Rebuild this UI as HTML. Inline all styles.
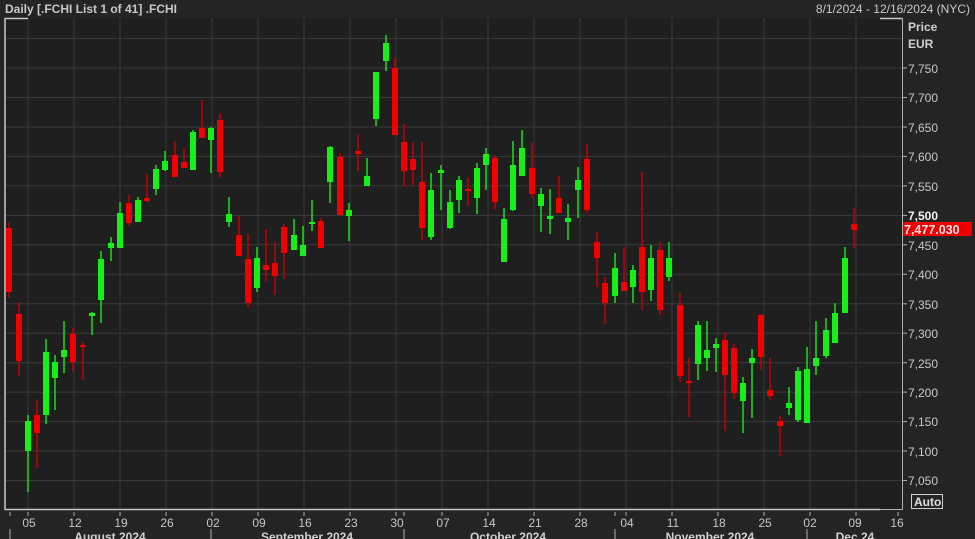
<!DOCTYPE html>
<html><head><meta charset="utf-8"><style>
html,body{margin:0;padding:0;background:#242424;width:975px;height:539px;overflow:hidden;font-family:"Liberation Sans",sans-serif}
svg{position:absolute;left:0;top:0}
</style></head><body>
<svg width="975" height="539" viewBox="0 0 975 539" font-family="Liberation Sans, sans-serif">
<rect x="0" y="0" width="975" height="539" fill="#242424"/>
<rect x="6" y="18" width="896" height="491" fill="#1f1f20"/>
<g stroke="#3a3a3a" stroke-width="1">
<line x1="6" x2="902" y1="38.5" y2="38.5"/><line x1="6" x2="902" y1="68" y2="68"/><line x1="6" x2="902" y1="97.5" y2="97.5"/><line x1="6" x2="902" y1="127" y2="127"/><line x1="6" x2="902" y1="156.4" y2="156.4"/><line x1="6" x2="902" y1="185.9" y2="185.9"/><line x1="6" x2="902" y1="215.4" y2="215.4"/><line x1="6" x2="902" y1="244.8" y2="244.8"/><line x1="6" x2="902" y1="274.3" y2="274.3"/><line x1="6" x2="902" y1="303.8" y2="303.8"/><line x1="6" x2="902" y1="333.2" y2="333.2"/><line x1="6" x2="902" y1="362.7" y2="362.7"/><line x1="6" x2="902" y1="392.1" y2="392.1"/><line x1="6" x2="902" y1="421.6" y2="421.6"/><line x1="6" x2="902" y1="451" y2="451"/><line x1="6" x2="902" y1="480.5" y2="480.5"/>
<line x1="28" x2="28" y1="18" y2="509"/><line x1="74" x2="74" y1="18" y2="509"/><line x1="120" x2="120" y1="18" y2="509"/><line x1="166" x2="166" y1="18" y2="509"/><line x1="212" x2="212" y1="18" y2="509"/><line x1="258" x2="258" y1="18" y2="509"/><line x1="304" x2="304" y1="18" y2="509"/><line x1="350" x2="350" y1="18" y2="509"/><line x1="396" x2="396" y1="18" y2="509"/><line x1="442" x2="442" y1="18" y2="509"/><line x1="488" x2="488" y1="18" y2="509"/><line x1="534" x2="534" y1="18" y2="509"/><line x1="580" x2="580" y1="18" y2="509"/><line x1="626" x2="626" y1="18" y2="509"/><line x1="672" x2="672" y1="18" y2="509"/><line x1="718" x2="718" y1="18" y2="509"/><line x1="764" x2="764" y1="18" y2="509"/><line x1="810" x2="810" y1="18" y2="509"/><line x1="856" x2="856" y1="18" y2="509"/>
</g>
<!-- candles -->
<g stroke-width="1.5">
<g stroke="#c00000" fill="#f00000">
<line x1="9" x2="9" y1="222" y2="298"/><rect x="6" y="228" width="6" height="64" stroke="none"/>
<line x1="19" x2="19" y1="302" y2="376"/><rect x="16" y="314" width="6" height="47" stroke="none"/>
<line x1="37" x2="37" y1="400" y2="468"/><rect x="34" y="415" width="6" height="18" stroke="none"/>
<line x1="73" x2="73" y1="328" y2="372"/><rect x="70" y="334" width="6" height="28" stroke="none"/>
<line x1="83" x2="83" y1="342" y2="380"/><rect x="80" y="345" width="6" height="2" stroke="none"/>
<line x1="129" x2="129" y1="195" y2="226"/><rect x="126" y="203" width="6" height="20" stroke="none"/>
<line x1="147" x2="147" y1="174" y2="202"/><rect x="144" y="198" width="6" height="3" stroke="none"/>
<line x1="175" x2="175" y1="141" y2="177"/><rect x="172" y="155" width="6" height="22" stroke="none"/>
<line x1="184" x2="184" y1="148" y2="168"/><rect x="181" y="162" width="6" height="6" stroke="none"/>
<line x1="202" x2="202" y1="100" y2="138"/><rect x="199" y="128" width="6" height="10" stroke="none"/>
<line x1="220" x2="220" y1="113" y2="177"/><rect x="217" y="120" width="6" height="52" stroke="none"/>
<line x1="239" x2="239" y1="216" y2="256"/><rect x="236" y="235" width="6" height="21" stroke="none"/>
<line x1="248" x2="248" y1="234" y2="308"/><rect x="245" y="259" width="6" height="44" stroke="none"/>
<line x1="266" x2="266" y1="229" y2="281"/><rect x="263" y="265" width="6" height="5" stroke="none"/>
<line x1="275" x2="275" y1="242" y2="295"/><rect x="272" y="263" width="6" height="13" stroke="none"/>
<line x1="284" x2="284" y1="224" y2="279"/><rect x="281" y="227" width="6" height="26" stroke="none"/>
<line x1="321" x2="321" y1="218" y2="248"/><rect x="318" y="221" width="6" height="27" stroke="none"/>
<line x1="340" x2="340" y1="153" y2="215"/><rect x="337" y="157" width="6" height="58" stroke="none"/>
<line x1="358" x2="358" y1="135" y2="171"/><rect x="355" y="151" width="6" height="3" stroke="none"/>
<line x1="395" x2="395" y1="58" y2="135"/><rect x="392" y="68" width="6" height="67" stroke="none"/>
<line x1="404" x2="404" y1="124" y2="187"/><rect x="401" y="142" width="6" height="29" stroke="none"/>
<line x1="413" x2="413" y1="142" y2="186"/><rect x="410" y="159" width="6" height="11" stroke="none"/>
<line x1="422" x2="422" y1="142" y2="240"/><rect x="419" y="182" width="6" height="46" stroke="none"/>
<line x1="468" x2="468" y1="177" y2="206"/><rect x="465" y="189" width="6" height="2" stroke="none"/>
<line x1="495" x2="495" y1="155" y2="209"/><rect x="492" y="158" width="6" height="44" stroke="none"/>
<line x1="532" x2="532" y1="143" y2="198"/><rect x="529" y="168" width="6" height="26" stroke="none"/>
<line x1="559" x2="559" y1="176" y2="213"/><rect x="556" y="198" width="6" height="15" stroke="none"/>
<line x1="587" x2="587" y1="144" y2="213"/><rect x="584" y="159" width="6" height="51" stroke="none"/>
<line x1="597" x2="597" y1="232" y2="287"/><rect x="594" y="242" width="6" height="16" stroke="none"/>
<line x1="605" x2="605" y1="277" y2="324"/><rect x="602" y="283" width="6" height="20" stroke="none"/>
<line x1="624" x2="624" y1="247" y2="291"/><rect x="621" y="282" width="6" height="9" stroke="none"/>
<line x1="642" x2="642" y1="172" y2="310"/><rect x="639" y="247" width="6" height="45" stroke="none"/>
<line x1="660" x2="660" y1="242" y2="315"/><rect x="657" y="250" width="6" height="60" stroke="none"/>
<line x1="680" x2="680" y1="293" y2="382"/><rect x="677" y="305" width="6" height="71" stroke="none"/>
<line x1="689" x2="689" y1="358" y2="417"/><rect x="686" y="381" width="6" height="2" stroke="none"/>
<line x1="725" x2="725" y1="332" y2="431"/><rect x="722" y="340" width="6" height="35" stroke="none"/>
<line x1="734" x2="734" y1="344" y2="399"/><rect x="731" y="348" width="6" height="45" stroke="none"/>
<line x1="761" x2="761" y1="314" y2="370"/><rect x="758" y="315" width="6" height="42" stroke="none"/>
<line x1="770" x2="770" y1="358" y2="400"/><rect x="767" y="390" width="6" height="6" stroke="none"/>
<line x1="780" x2="780" y1="416" y2="456"/><rect x="777" y="421" width="6" height="5" stroke="none"/>
<line x1="854" x2="854" y1="208" y2="248"/><rect x="851" y="224" width="6" height="6" stroke="none"/>
</g>
<g stroke="#16e016" fill="#16f016">
<line x1="28" x2="28" y1="415" y2="492"/><rect x="25" y="421" width="6" height="30" stroke="none"/>
<line x1="46" x2="46" y1="339" y2="424"/><rect x="43" y="352" width="6" height="63" stroke="none"/>
<line x1="55" x2="55" y1="355" y2="410"/><rect x="52" y="362" width="6" height="16" stroke="none"/>
<line x1="64" x2="64" y1="321" y2="373"/><rect x="61" y="350" width="6" height="7" stroke="none"/>
<line x1="92" x2="92" y1="312" y2="335"/><rect x="89" y="313" width="6" height="3" stroke="none"/>
<line x1="101" x2="101" y1="251" y2="323"/><rect x="98" y="259" width="6" height="41" stroke="none"/>
<line x1="111" x2="111" y1="237" y2="261"/><rect x="108" y="243" width="6" height="5" stroke="none"/>
<line x1="120" x2="120" y1="202" y2="248"/><rect x="117" y="213" width="6" height="35" stroke="none"/>
<line x1="138" x2="138" y1="197" y2="222"/><rect x="135" y="200" width="6" height="22" stroke="none"/>
<line x1="156" x2="156" y1="165" y2="195"/><rect x="153" y="169" width="6" height="20" stroke="none"/>
<line x1="165" x2="165" y1="151" y2="171"/><rect x="162" y="161" width="6" height="9" stroke="none"/>
<line x1="193" x2="193" y1="130" y2="170"/><rect x="190" y="132" width="6" height="38" stroke="none"/>
<line x1="211" x2="211" y1="127" y2="173"/><rect x="208" y="128" width="6" height="12" stroke="none"/>
<line x1="229" x2="229" y1="197" y2="227"/><rect x="226" y="214" width="6" height="8" stroke="none"/>
<line x1="257" x2="257" y1="247" y2="292"/><rect x="254" y="258" width="6" height="30" stroke="none"/>
<line x1="294" x2="294" y1="219" y2="250"/><rect x="291" y="235" width="6" height="15" stroke="none"/>
<line x1="303" x2="303" y1="226" y2="256"/><rect x="300" y="245" width="6" height="11" stroke="none"/>
<line x1="312" x2="312" y1="200" y2="231"/><rect x="309" y="222" width="6" height="2" stroke="none"/>
<line x1="330" x2="330" y1="146" y2="203"/><rect x="327" y="147" width="6" height="35" stroke="none"/>
<line x1="349" x2="349" y1="203" y2="241"/><rect x="346" y="210" width="6" height="6" stroke="none"/>
<line x1="367" x2="367" y1="158" y2="186"/><rect x="364" y="176" width="6" height="10" stroke="none"/>
<line x1="376" x2="376" y1="72" y2="126"/><rect x="373" y="72" width="6" height="47" stroke="none"/>
<line x1="386" x2="386" y1="35" y2="71"/><rect x="383" y="43" width="6" height="18" stroke="none"/>
<line x1="431" x2="431" y1="173" y2="240"/><rect x="428" y="190" width="6" height="47" stroke="none"/>
<line x1="441" x2="441" y1="165" y2="210"/><rect x="438" y="170" width="6" height="3" stroke="none"/>
<line x1="450" x2="450" y1="190" y2="229"/><rect x="447" y="202" width="6" height="26" stroke="none"/>
<line x1="459" x2="459" y1="176" y2="213"/><rect x="456" y="180" width="6" height="20" stroke="none"/>
<line x1="477" x2="477" y1="163" y2="214"/><rect x="474" y="168" width="6" height="30" stroke="none"/>
<line x1="486" x2="486" y1="148" y2="190"/><rect x="483" y="154" width="6" height="11" stroke="none"/>
<line x1="504" x2="504" y1="208" y2="262"/><rect x="501" y="219" width="6" height="43" stroke="none"/>
<line x1="513" x2="513" y1="141" y2="211"/><rect x="510" y="165" width="6" height="45" stroke="none"/>
<line x1="522" x2="522" y1="130" y2="176"/><rect x="519" y="148" width="6" height="28" stroke="none"/>
<line x1="541" x2="541" y1="188" y2="232"/><rect x="538" y="194" width="6" height="12" stroke="none"/>
<line x1="550" x2="550" y1="189" y2="234"/><rect x="547" y="216" width="6" height="3" stroke="none"/>
<line x1="568" x2="568" y1="204" y2="240"/><rect x="565" y="218" width="6" height="4" stroke="none"/>
<line x1="578" x2="578" y1="167" y2="218"/><rect x="575" y="180" width="6" height="10" stroke="none"/>
<line x1="615" x2="615" y1="253" y2="303"/><rect x="612" y="268" width="6" height="28" stroke="none"/>
<line x1="633" x2="633" y1="265" y2="303"/><rect x="630" y="270" width="6" height="17" stroke="none"/>
<line x1="651" x2="651" y1="245" y2="301"/><rect x="648" y="258" width="6" height="32" stroke="none"/>
<line x1="669" x2="669" y1="242" y2="281"/><rect x="666" y="258" width="6" height="19" stroke="none"/>
<line x1="698" x2="698" y1="321" y2="380"/><rect x="695" y="325" width="6" height="39" stroke="none"/>
<line x1="707" x2="707" y1="321" y2="371"/><rect x="704" y="350" width="6" height="8" stroke="none"/>
<line x1="716" x2="716" y1="338" y2="372"/><rect x="713" y="344" width="6" height="4" stroke="none"/>
<line x1="743" x2="743" y1="377" y2="433"/><rect x="740" y="383" width="6" height="18" stroke="none"/>
<line x1="752" x2="752" y1="349" y2="418"/><rect x="749" y="358" width="6" height="5" stroke="none"/>
<line x1="789" x2="789" y1="387" y2="415"/><rect x="786" y="403" width="6" height="5" stroke="none"/>
<line x1="798" x2="798" y1="367" y2="422"/><rect x="795" y="371" width="6" height="49" stroke="none"/>
<line x1="807" x2="807" y1="347" y2="423"/><rect x="804" y="369" width="6" height="54" stroke="none"/>
<line x1="816" x2="816" y1="321" y2="375"/><rect x="813" y="358" width="6" height="8" stroke="none"/>
<line x1="826" x2="826" y1="318" y2="358"/><rect x="823" y="330" width="6" height="26" stroke="none"/>
<line x1="835" x2="835" y1="303" y2="343"/><rect x="832" y="313" width="6" height="30" stroke="none"/>
<line x1="845" x2="845" y1="247" y2="313"/><rect x="842" y="258" width="6" height="55" stroke="none"/>
</g>
</g>
<!-- frame -->
<g stroke="#c8c8c8" stroke-width="1.5" fill="none">
<line x1="5" y1="18" x2="5" y2="510"/>
<line x1="5" y1="18.5" x2="28" y2="18.5"/>
<line x1="880" y1="18.5" x2="902" y2="18.5"/>
<line x1="5" y1="509.5" x2="880" y2="509.5"/>
</g>
<line x1="902.5" y1="18" x2="902.5" y2="510" stroke="#b0b0b0" stroke-width="1"/>
<line x1="880" y1="509.5" x2="902" y2="509.5" stroke="#b0b0b0" stroke-width="1"/>
<g stroke="#b0b0b0" stroke-width="1">
<line x1="902" x2="907" y1="68" y2="68"/><line x1="902" x2="907" y1="97.5" y2="97.5"/><line x1="902" x2="907" y1="127" y2="127"/><line x1="902" x2="907" y1="156.4" y2="156.4"/><line x1="902" x2="907" y1="185.9" y2="185.9"/><line x1="902" x2="907" y1="215.4" y2="215.4"/><line x1="902" x2="907" y1="244.8" y2="244.8"/><line x1="902" x2="907" y1="274.3" y2="274.3"/><line x1="902" x2="907" y1="303.8" y2="303.8"/><line x1="902" x2="907" y1="333.2" y2="333.2"/><line x1="902" x2="907" y1="362.7" y2="362.7"/><line x1="902" x2="907" y1="392.1" y2="392.1"/><line x1="902" x2="907" y1="421.6" y2="421.6"/><line x1="902" x2="907" y1="451" y2="451"/><line x1="902" x2="907" y1="480.5" y2="480.5"/>
<line x1="10" x2="10" y1="512" y2="516"/><line x1="28" x2="28" y1="512" y2="516"/><line x1="74" x2="74" y1="512" y2="516"/><line x1="120" x2="120" y1="512" y2="516"/><line x1="166" x2="166" y1="512" y2="516"/><line x1="212" x2="212" y1="512" y2="516"/><line x1="258" x2="258" y1="512" y2="516"/><line x1="304" x2="304" y1="512" y2="516"/><line x1="350" x2="350" y1="512" y2="516"/><line x1="396" x2="396" y1="512" y2="516"/><line x1="404" x2="404" y1="512" y2="516"/><line x1="442" x2="442" y1="512" y2="516"/><line x1="488" x2="488" y1="512" y2="516"/><line x1="534" x2="534" y1="512" y2="516"/><line x1="580" x2="580" y1="512" y2="516"/><line x1="615" x2="615" y1="512" y2="516"/><line x1="626" x2="626" y1="512" y2="516"/><line x1="672" x2="672" y1="512" y2="516"/><line x1="718" x2="718" y1="512" y2="516"/><line x1="764" x2="764" y1="512" y2="516"/><line x1="810" x2="810" y1="512" y2="516"/><line x1="856" x2="856" y1="512" y2="516"/><line x1="898" x2="898" y1="512" y2="516"/>
<line x1="10" x2="10" y1="529" y2="539"/><line x1="211" x2="211" y1="529" y2="539"/><line x1="404" x2="404" y1="529" y2="539"/><line x1="615" x2="615" y1="529" y2="539"/><line x1="807" x2="807" y1="529" y2="539"/>
</g>
<!-- text -->
<text x="5" y="13" font-size="12" font-weight="bold" fill="#c8c8c8">Daily [.FCHI List 1 of 41] .FCHI</text>
<text x="970" y="13" font-size="12" fill="#c8c8c8" text-anchor="end">8/1/2024 - 12/16/2024 (NYC)</text>
<text x="908" y="31" font-size="12" font-weight="bold" fill="#d0d0d0">Price</text>
<text x="908" y="48" font-size="12" font-weight="bold" fill="#d0d0d0">EUR</text>
<g font-size="12" fill="#c8c8c8">
<text x="908" y="73">7,750</text><text x="908" y="102">7,700</text><text x="908" y="132">7,650</text><text x="908" y="161">7,600</text><text x="908" y="191">7,550</text>
<text x="908" y="220" font-weight="bold" fill="#f0f0f0">7,500</text>
<text x="908" y="250">7,450</text><text x="908" y="279">7,400</text><text x="908" y="309">7,350</text><text x="908" y="338">7,300</text><text x="908" y="368">7,250</text><text x="908" y="397">7,200</text><text x="908" y="426">7,150</text><text x="908" y="456">7,100</text><text x="908" y="485">7,050</text>
</g>
<rect x="903" y="222" width="69" height="14" fill="#ee0000"/>
<text x="904" y="234" font-size="12.5" font-weight="bold" fill="#ffe0e0">7,477.030</text>
<rect x="911.5" y="494.5" width="31" height="14" fill="none" stroke="#d0d0d0" stroke-width="1"/>
<text x="914" y="506" font-size="12" font-weight="bold" fill="#e0e0e0">Auto</text>
<g font-size="12" fill="#c8c8c8" text-anchor="middle">
<text x="29" y="527">05</text><text x="75" y="527">12</text><text x="121" y="527">19</text><text x="167" y="527">26</text><text x="213" y="527">02</text><text x="259" y="527">09</text><text x="305" y="527">16</text><text x="351" y="527">23</text><text x="397" y="527">30</text><text x="443" y="527">07</text><text x="489" y="527">14</text><text x="535" y="527">21</text><text x="581" y="527">28</text><text x="627" y="527">04</text><text x="673" y="527">11</text><text x="719" y="527">18</text><text x="765" y="527">25</text><text x="810" y="527">02</text><text x="855" y="527">09</text><text x="897" y="527">16</text>
</g>
<g font-size="12" font-weight="bold" fill="#d0d0d0" text-anchor="middle">
<text x="110" y="541">August 2024</text><text x="307" y="541">September 2024</text><text x="508" y="541">October 2024</text><text x="710" y="541">November 2024</text><text x="855" y="541">Dec 24</text>
</g>
</svg>
</body></html>
